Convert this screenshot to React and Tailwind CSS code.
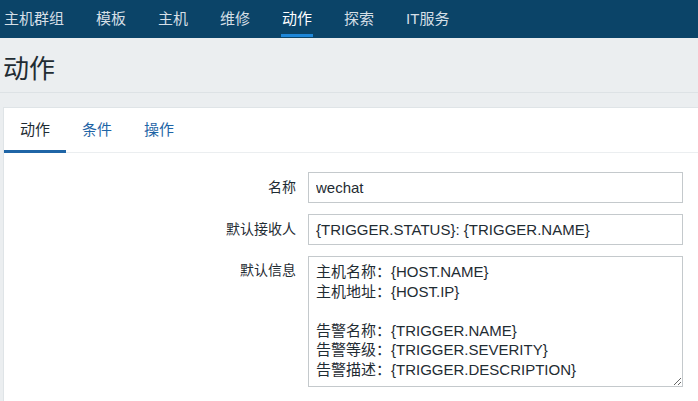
import { useState } from "react";

const NAV = ["主机群组", "模板", "主机", "维修", "动作", "探索", "IT服务"];
const TABS = ["动作", "条件", "操作"];

const FONT = "font-['Liberation_Sans','Noto_Sans_CJK_SC',sans-serif]";

const MESSAGE = `主机名称：{HOST.NAME}
主机地址：{HOST.IP}

告警名称：{TRIGGER.NAME}
告警等级：{TRIGGER.SEVERITY}
告警描述：{TRIGGER.DESCRIPTION}`;

export default function App() {
  const [tab, setTab] = useState("动作");
  const [name, setName] = useState("wechat");
  const [subject, setSubject] = useState("{TRIGGER.STATUS}: {TRIGGER.NAME}");
  const [message, setMessage] = useState(MESSAGE);

  return (
    <div className={"w-[698px] h-[401px] overflow-hidden bg-[#ebeef0] " + FONT}>
      {/* top menu */}
      <nav className="h-[38px] bg-[#0b4468] flex items-stretch gap-[32px] pl-[4px]">
        {NAV.map((item) => (
          <a
            key={item}
            className={
              "relative flex items-center text-[15px] " +
              (item === "动作" ? "text-white" : "text-[#d5dfe6]")
            }
          >
            {item}
            {item === "动作" && (
              <span className="absolute left-[-1px] right-[-1px] bottom-[1px] h-[3px] bg-[#1e87d9]" />
            )}
          </a>
        ))}
      </nav>

      {/* header */}
      <div className="h-[55px] pl-[3px] pt-[18px] border-b border-[#dde2e5]">
        <h1 className="text-[26px] text-[#1f2c33] leading-none">动作</h1>
      </div>

      {/* panel */}
      <div className="mt-[14px] ml-[3px] bg-white border-l border-t border-[#dfe4e7]">
        <div className="h-[45px] flex border-b border-[#ebeef0]">
          {TABS.map((t) => (
            <button
              key={t}
              onClick={() => setTab(t)}
              className={
                "relative px-[16px] text-[15px] " +
                (tab === t ? "text-[#1f2c33]" : "text-[#1f65a6]")
              }
            >
              {t}
              {tab === t && (
                <span className="absolute left-0 right-0 bottom-[-1px] h-[3px] bg-[#1f65a6]" />
              )}
            </button>
          ))}
        </div>

        <div className="pt-[19px] pb-[20px] flex flex-col gap-[11px]">
          <div className="flex items-center">
            <label className="w-[304px] text-right pr-[12px] text-[14px] text-[#1f2c33]">
              名称
            </label>
            <input
              value={name}
              onChange={(e) => setName(e.target.value)}
              className="w-[375px] h-[31px] border border-[#c4c9cc] px-[7px] text-[15px] text-[#1f2c33] outline-none"
            />
          </div>
          <div className="flex items-center">
            <label className="w-[304px] text-right pr-[12px] text-[14px] text-[#1f2c33]">
              默认接收人
            </label>
            <input
              value={subject}
              onChange={(e) => setSubject(e.target.value)}
              className="w-[375px] h-[31px] border border-[#c4c9cc] px-[7px] text-[15px] text-[#1f2c33] outline-none"
            />
          </div>
          <div className="flex items-start">
            <label className="w-[304px] text-right pr-[12px] text-[14px] text-[#1f2c33] pt-[4px]">
              默认信息
            </label>
            <textarea
              value={message}
              onChange={(e) => setMessage(e.target.value)}
              className="w-[375px] h-[131px] border border-[#c4c9cc] px-[7px] pt-[5px] text-[15px] leading-[19.5px] text-[#1f2c33] outline-none"
            />
          </div>
        </div>
      </div>
    </div>
  );
}
